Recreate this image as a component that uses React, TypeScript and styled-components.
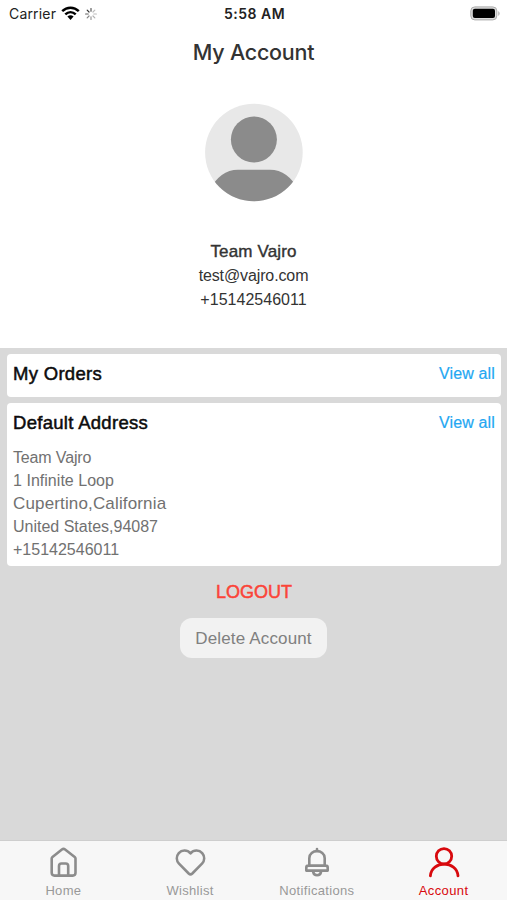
import React from "react";
import styled, { createGlobalStyle } from "styled-components";

const GlobalStyle = createGlobalStyle`
  * { box-sizing: border-box; }
  body { margin: 0; background: #d9d9d9; }
`;

const sans = `"Liberation Sans", Arial, sans-serif`;
const system = `Inter, "Liberation Sans", sans-serif`;

const Screen = styled.main`
  width: 507px;
  height: 900px;
  display: flex;
  flex-direction: column;
  overflow: hidden;
  background: #d9d9d9;
  font-family: ${sans};
`;

const Profile = styled.section`
  height: 348px;
  display: flex;
  flex-direction: column;
  align-items: center;
  background: #fff;
  color: #333;
`;

const StatusBar = styled.header`
  width: 100%;
  height: 28px;
  padding: 0 7px 0 9px;
  display: grid;
  grid-template-columns: 1fr auto 1fr;
  align-items: center;
  font-family: ${system};
  color: #222;
`;

const Carrier = styled.div`
  display: flex;
  align-items: center;
  margin-top: -1px;
  font-size: 14px;
  letter-spacing: 0.18px;
  svg:first-of-type { margin-left: 5px; }
  svg:last-of-type { margin-left: 4px; }
`;

const Time = styled.time`
  margin-top: -1px;
  font-size: 14px;
  font-weight: 600;
  letter-spacing: 0.5px;
`;

const Battery = styled.svg`
  justify-self: end;
  margin: -2px -1px 0 0;
`;

const Title = styled.h1`
  margin: 9px 0 0;
  line-height: 30px;
  font-family: ${system};
  font-size: 21.5px;
  font-weight: 500;
  letter-spacing: -0.25px;
`;

const Avatar = styled.svg`
  margin-top: 36px;
`;

const Name = styled.div`
  margin-top: 38px;
  line-height: 24px;
  font-size: 17px;
  letter-spacing: 0.15px;
  -webkit-text-stroke: 0.4px currentColor;
`;

const Contact = styled.div<{ $spacing: number }>`
  line-height: 24.2px;
  font-size: 16px;
  letter-spacing: ${(p) => p.$spacing}px;
`;

const Content = styled.section`
  flex: 1;
  padding: 6px 6px 0 7px;
  display: flex;
  flex-direction: column;
  align-items: center;
`;

const Card = styled.article<{ $height: number }>`
  width: 100%;
  height: ${(p) => p.$height}px;
  margin-bottom: 6px;
  padding: 4px 6px 0;
  border-radius: 4px;
  background: #fff;
`;

const CardHeader = styled.div`
  height: 31px;
  display: flex;
  align-items: center;
  justify-content: space-between;
`;

const CardTitle = styled.h2`
  margin: 0;
  font-size: 18.5px;
  font-weight: 400;
  color: #0c0c0c;
  letter-spacing: 0.3px;
  -webkit-text-stroke: 0.5px currentColor;
`;

const ViewAll = styled.a`
  font-size: 16px;
  letter-spacing: 0.15px;
  color: #24a7f2;
  -webkit-text-stroke: 0.2px currentColor;
`;

const Address = styled.address`
  margin-top: 9px;
  display: flex;
  flex-direction: column;
  font-style: normal;
  color: #717171;
`;

const AddressLine = styled.span<{ $spacing: number; $size?: number }>`
  line-height: 22.9px;
  font-size: ${(p) => p.$size ?? 16}px;
  letter-spacing: ${(p) => p.$spacing}px;
`;

const Logout = styled.button`
  margin-top: 6px;
  padding: 0;
  border: 0;
  background: none;
  height: 29px;
  font-family: ${sans};
  font-size: 18px;
  letter-spacing: 0;
  color: #fb4438;
  -webkit-text-stroke: 0.5px currentColor;
`;

const DeleteButton = styled.button`
  width: 147px;
  height: 40px;
  margin: 11px 1px 0 0;
  padding: 1px 0 0;
  border: 0;
  border-radius: 12px;
  background: #f2f2f2;
  color: #808080;
  font-family: ${sans};
  font-size: 17px;
  letter-spacing: 0.15px;
`;

const TabBar = styled.nav`
  height: 60px;
  display: grid;
  grid-template-columns: repeat(4, 1fr);
  border-top: 1px solid #cecece;
  background: #f7f7f7;
`;

const Tab = styled.a<{ $active?: boolean }>`
  display: flex;
  flex-direction: column;
  align-items: center;
  padding-top: 6px;
  color: ${(p) => (p.$active ? "#d8090d" : "#999")};
  svg { color: ${(p) => (p.$active ? "#d8090d" : "#8c8c8c")}; }
`;

const TabLabel = styled.span<{ $spacing: number }>`
  margin-top: 3px;
  line-height: 17px;
  font-size: 13px;
  letter-spacing: ${(p) => p.$spacing}px;
  white-space: nowrap;
`;

const TabIcon = ({ children }: { children: React.ReactNode }) => (
  <svg width="34" height="32" viewBox="0 0 34 32" fill="none" stroke="currentColor" strokeWidth="2.6" strokeLinecap="round" strokeLinejoin="round">
    {children}
  </svg>
);

const address = [
  { text: "Team Vajro", spacing: -0.15 },
  { text: "1 Infinite Loop", spacing: 0.03 },
  { text: "Cupertino,California", spacing: 0.15, size: 17 },
  { text: "United States,94087", spacing: 0 },
  { text: "+15142546011", spacing: 0 },
];

const tabs = [
  {
    label: "Home", spacing: 0.3,
    icon: <path transform="translate(.5 0)" d="M5.2 11.5Q5.2 10.7 6 10L15.4 2.5Q17 1.3 18.6 2.5L28.2 10Q29 10.7 29 11.5V25.8Q29 28.6 26.2 28.6H8Q5.2 28.6 5.2 25.8ZM12.5 28V19Q12.5 16.5 15 16.5H19.2Q21.7 16.5 21.7 19V28" />,
  },
  {
    label: "Wishlist", spacing: 0.3,
    icon: <path transform="translate(.5 .3)" d="M17 6C13.5 2.1 8.1 2.7 5.3 5.8C2.5 9 2.8 13.3 5.5 16.4L15.2 26.2Q17 27.9 18.8 26.2L28.5 16.4C31.2 13.3 31.5 9 28.7 5.8C25.9 2.7 20.5 2.1 17 6Z" />,
  },
  {
    label: "Notifications", spacing: 0.33,
    icon: <><path d="M17 2V4M9.3 18.3V11.2C9.3 1.8 24.7 1.8 24.7 11.2V18.3M8.4 18.6H25.6Q27.7 18.6 27.7 20.4V23.6H6.3V20.4Q6.3 18.6 8.4 18.6Z" /><path d="M13.2 25C14 29.3 20.2 29.3 21 25" /></>,
  },
  {
    label: "Account", spacing: 0.4, active: true,
    icon: <g strokeWidth="2.8"><circle cx="17" cy="9.3" r="7.7" /><path d="M3.4 28.8C4.5 13.2 29.9 13.2 31 28.8" /></g>,
  },
];

const spokes = [0.75, 0.3, 0.3, 0.35, 0.45, 0.55, 0.7, 0.9];

export default function App() {
  return (
    <>
      <GlobalStyle />
      <Screen>
        <Profile>
          <StatusBar>
            <Carrier>
              <span>Carrier</span>
              <svg width="19" height="15" viewBox="0 0 19 15" fill="none" stroke="#000" strokeWidth="2.5">
                <path d="M1.2 5.1C6 .5 13 .5 17.8 5.1M4.3 8.4C7.4 5.5 11.6 5.5 14.7 8.4" />
                <path d="M6.4 10.6Q9.5 8.1 12.6 10.6L9.5 14Z" fill="#000" stroke="none" />
              </svg>
              <svg width="14" height="14" viewBox="-7 -7 14 14" stroke="#222" strokeWidth="1.2" strokeLinecap="round">
                {spokes.map((opacity, i) => (
                  <path key={i} d="M0-2.8V-5.4" opacity={opacity} transform={`rotate(${i * 45})`} />
                ))}
              </svg>
            </Carrier>
            <Time>5:58 AM</Time>
            <Battery width="31" height="15" viewBox="0 0 31 15">
              <rect x="0.8" y="0.9" width="26" height="13" rx="4" fill="#ddd" stroke="#aaa" />
              <rect x="2.8" y="2.7" width="22.2" height="9.3" rx="2" fill="#000" />
              <path d="M28.3 5Q31 7.5 28.3 10Z" fill="#aaa" />
            </Battery>
          </StatusBar>
          <Title>My Account</Title>
          <Avatar width="99" height="99" viewBox="0 0 99 99">
            <defs><clipPath id="avatar-circle"><circle cx="49.9" cy="49.5" r="48.8" /></clipPath></defs>
            <g clipPath="url(#avatar-circle)">
              <path d="M0 0H99V99H0Z" fill="#e8e8e8" />
              <circle cx="49.9" cy="36.5" r="23" fill="#8b8b8b" />
              <path d="M5 99V88Q16 66.8 34 66.8H66Q84 66.8 95 88V99Z" fill="#8b8b8b" />
            </g>
          </Avatar>
          <Name>Team Vajro</Name>
          <Contact $spacing={-0.12}>test@vajro.com</Contact>
          <Contact $spacing={0.02}>+15142546011</Contact>
        </Profile>
        <Content>
          <Card $height={43}>
            <CardHeader>
              <CardTitle>My Orders</CardTitle>
              <ViewAll>View all</ViewAll>
            </CardHeader>
          </Card>
          <Card $height={163}>
            <CardHeader>
              <CardTitle>Default Address</CardTitle>
              <ViewAll>View all</ViewAll>
            </CardHeader>
            <Address>
              {address.map((line) => (
                <AddressLine key={line.text} $spacing={line.spacing} $size={line.size}>{line.text}</AddressLine>
              ))}
            </Address>
          </Card>
          <Logout>LOGOUT</Logout>
          <DeleteButton>Delete Account</DeleteButton>
        </Content>
        <TabBar>
          {tabs.map((tab) => (
            <Tab key={tab.label} $active={tab.active}>
              <TabIcon>{tab.icon}</TabIcon>
              <TabLabel $spacing={tab.spacing}>{tab.label}</TabLabel>
            </Tab>
          ))}
        </TabBar>
      </Screen>
    </>
  );
}
